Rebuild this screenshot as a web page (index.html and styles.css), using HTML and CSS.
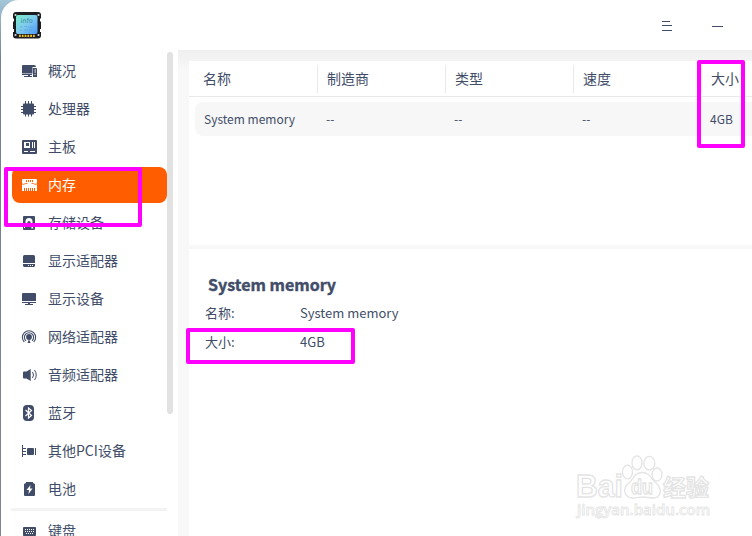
FILE: index.html
```
<!DOCTYPE html>
<html lang="zh-CN">
<head>
	<meta charset="utf-8" />
	<title>设备管理器</title>
	<link rel="stylesheet" href="styles.css">
</head>
<body>
	<div id="window">
		<div class="titlebar">
			<svg class="logo" width="30" height="28" viewBox="0 0 30 28">
				<defs>
					<linearGradient id="screen" x1="0" y1="0" x2="1" y2="1">
						<stop offset="0" stop-color="#79efc8" />
						<stop offset=".5" stop-color="#7fc9ee" />
						<stop offset="1" stop-color="#4a98fa" />
					</linearGradient>
				</defs>
				<rect x="1" y="1" width="28" height="26.500" rx="3" fill="#1c1d20" />
				<path d="M0 7.500h2v3H0zM28 7.500h2v3h-2zM0 18h2v3H0zM28 18h2v3h-2z" fill="#fff" />
				<g fill="#d5dadd"><circle cx="3.500" cy="4" r="1.100" /><circle cx="26.500" cy="4" r="1.100" /><circle cx="3.500" cy="24" r="1.100" /><circle cx="26.500" cy="24" r="1.100" /></g>
				<rect x="4" y="4" width="21.500" height="19" rx="2" fill="url(#screen)" />
				<text x="8.500" y="12" class="logo-text">info</text>
				<path d="M8 16h3M12 15.500h3M16 16h5M8 19h2M12 19h4M17 19h3" stroke="#4b9fc9" stroke-width=".8" opacity=".6" />
				<path d="M7 24.800h16.500" stroke="#f1bd16" stroke-width="2.200" stroke-dasharray="1.800 1" />
			</svg>
			<svg class="menu" width="10" height="11" viewBox="0 0 10 11"><path d="M0 .5h8M0 4.500h10M0 9.500h10" stroke="#414d68" /></svg>
			<div class="minimize"></div>
		</div>
		<div class="body">
			<ul class="sidebar">
				<li><svg viewBox="0 0 16 16"><path d="M2 2h11a2 2 0 0 1 2 2v0h-3.500v6.500H1V3a1 1 0 0 1 1-1zM1 11h10v1H9v1h2v1H3v-1h4v-1H1zM12 5h3a1 1 0 0 1 1 1v8h-4z" /><path d="M13.500 7h1.500M13.500 9h1.500M13.500 11.500h1" stroke="#fff" /></svg><span>概况</span></li>
				<li><svg viewBox="0 0 16 16"><rect x="2" y="2.500" width="11" height="11" rx="1" /><path d="M4.500 0v15.500M7.500 0v15.500M10.500 0v15.500M0 5.500h15M0 8.500h15M0 11.500h15" stroke="#414d68" fill="none" /></svg><span>处理器</span></li>
				<li><svg viewBox="0 0 16 16"><path fill-rule="evenodd" d="M2 1h13a1 1 0 0 1 1 1v12a1 1 0 0 1-1 1H2a1 1 0 0 1-1-1V2a1 1 0 0 1 1-1zM3 3v6h6V3zM11 3v6h1V3zM13 3v6h1V3zM3 12v1h4v-1zM9 12v1h5v-1z" /><path d="M5 4h3v3H5z" /></svg><span>主板</span></li>
				<li class="selected"><svg viewBox="0 0 16 16"><path d="M2 2h13a1 1 0 0 1 1 1v3.200a.8.8 0 0 0 0 1.600V14h-2v-3h-1v3h-1v-3h-1v3h-1v-3H9v3H8v-3H7v3H6v-3H5v3H4v-3H3v3H1V7.800a.8.8 0 0 0 0-1.600V3a1 1 0 0 1 1-1z" /><path d="M5 4h7.500" stroke="#ff5d00" stroke-dasharray="1 1" stroke-width="2" /><path d="M2 7.500l3-1h1.500M15 7.500l-3-1h-1.500" fill="none" stroke="#ff5d00" stroke-width=".8" /></svg><span>内存</span></li>
				<li><svg viewBox="0 0 16 16"><path fill-rule="evenodd" d="M3 1h10a1 1 0 0 1 1 1v12a1 1 0 0 1-1 1H3a1 1 0 0 1-1-1V2a1 1 0 0 1 1-1zM4.500 12V6.500a3.500 3.500 0 0 1 7 0V11l1 2.500h-2l-2-2zM3 12v1h1v-1z" /><circle cx="8" cy="7.500" r="1.600" /><path d="M8.500 9l3 3-2.500 1z" /></svg><span>存储设备</span></li>
				<li><svg viewBox="0 0 16 16"><path d="M3.500 2h9A1.500 1.500 0 0 1 14 3.500V10H2V3.500A1.500 1.500 0 0 1 3.500 2zM2 11h12v1.500a1.500 1.500 0 0 1-1.500 1.500h-9A1.500 1.500 0 0 1 2 12.500z" /><path d="M7 12.500h6" stroke="#fff" stroke-dasharray="1 1" /></svg><span>显示适配器</span></li>
				<li><svg viewBox="0 0 16 16"><path d="M2 2h12a1 1 0 0 1 1 1v7H1V3a1 1 0 0 1 1-1zM1 11h14v1H9v1h3v1H4v-1h3v-1H1z" /></svg><span>显示设备</span></li>
				<li><svg viewBox="0 0 16 16"><circle cx="8" cy="8" r="2.900" /><path d="M5 11.800a4.600 4.600 0 1 1 6 0M3.300 13a6.600 6.600 0 1 1 9.400 0" fill="none" stroke="#414d68" stroke-width="1.100" /><path d="M6.500 14L8 10l1.500 4z" /></svg><span>网络适配器</span></li>
				<li><svg viewBox="0 0 16 16"><path d="M3 4.500h2.500L9.700 2v12l-4.200-2.500H3a1 1 0 0 1-1-1v-5a1 1 0 0 1 1-1z" /><path d="M11.500 5q2 3 0 6M13.500 3q3.500 5 0 10" fill="none" stroke="#414d68" /></svg><span>音频适配器</span></li>
				<li><svg viewBox="0 0 16 16"><rect x="2" y="0" width="11" height="16" rx="4" /><path d="M4.500 5l6 5.500L7.500 13V3l3 2.500-6 5.500" fill="none" stroke="#fff" stroke-width="1.200" /></svg><span>蓝牙</span></li>
				<li><svg viewBox="0 0 16 16"><path d="M1.500 2v12M1.500 5.500H5M1.500 8.500H5M1.500 11.500H5M14.500 5v7" stroke="#414d68" /><rect x="6" y="5" width="7" height="7" rx="1" /></svg><span>其他PCI设备</span></li>
				<li><svg viewBox="0 0 16 16"><path d="M5 1h7v1l2 1v11a1 1 0 0 1-1 1H4a1 1 0 0 1-1-1V3l2-1z" /><path d="M9.500 4l-4 5H8l-.5 4 4-5.500H9z" fill="#fff" /></svg><span>电池</span></li>
				<li class="separator"></li>
				<li class="keyboard"><svg viewBox="0 0 16 16"><rect x="2" y="4" width="13" height="9" rx=".8" /><path d="M4 6.500h10M4 8.500h10M5 10.500h7" stroke="#fff" stroke-dasharray="1 1" /></svg><span>键盘</span></li>
			</ul>
			<div class="scrollbar"></div>
			<div class="content">
				<div class="table">
					<div class="row header">
						<span>名称</span><span>制造商</span><span>类型</span><span>速度</span><span>大小</span>
					</div>
					<div class="row item">
						<span>System memory</span><span>--</span><span>--</span><span>--</span><span>4GB</span>
					</div>
				</div>
				<div class="details">
					<h2>System memory</h2>
					<dl>
						<dt>名称:</dt><dd>System memory</dd>
						<dt>大小:</dt><dd>4GB</dd>
					</dl>
				</div>
			</div>
		</div>
	</div>

	<div class="mark mark-menu"></div>
	<div class="mark mark-column"></div>
	<div class="mark mark-size"></div>

	<svg class="watermark" width="140" height="70" viewBox="0 0 140 70">
		<g class="outline">
			<text x="2" y="42" class="brand" textLength="47" lengthAdjust="spacingAndGlyphs">Bai</text>
			<ellipse cx="53.500" cy="17" rx="5" ry="6.800" />
			<ellipse cx="63" cy="7.800" rx="5" ry="7" />
			<ellipse cx="75.300" cy="8.200" rx="5.500" ry="6.800" />
			<ellipse cx="83" cy="19.500" rx="5" ry="6.500" />
			<path d="M68 17.500C60 17.500 60 24 55 28C48 33 50 43 59 43C64 43 65 42 69 42C73 42 75 43 79 43C88 43 88 33 82 28C77 24 76 17.500 68 17.500Z" />
			<text x="57" y="38.500" class="du" textLength="22" lengthAdjust="spacingAndGlyphs">du</text>
			<text x="89" y="40.500" class="jingyan" textLength="46" lengthAdjust="spacingAndGlyphs">经验</text>
			<text x="3" y="60" class="address" textLength="133" lengthAdjust="spacingAndGlyphs">jingyan.baidu.com</text>
		</g>
	</svg>
</body>
</html>
```
FILE: styles.css
```
* {
	box-sizing: border-box;
}
body {
	margin: 0;
	height: 536px;
	overflow: hidden;
	background: linear-gradient(#a3c6d9, #718395 60px, #7e8492);
	color: #414d68;
	font-family: "Noto Sans CJK SC", sans-serif;
	font-size: 14px;
}
#window {
	display: flex;
	flex-direction: column;
	height: 536px;
	margin-left: 1px;
	background: #fff;
	border-radius: 18px 0 0 0;
	overflow: hidden;
}
.titlebar {
	display: flex;
	flex: none;
	align-items: center;
	height: 50px;
	padding: 2px 29px 0 11px;
}
.logo {
	margin-top: -2px;
}
.logo-text {
	font-family: "DejaVu Sans", sans-serif;
	font-size: 6.5px;
	fill: #358f9d;
}
.menu {
	margin-left: auto;
}
.minimize {
	width: 11px;
	height: 1px;
	margin-left: 40px;
	background: #414d68;
}
.body {
	display: flex;
	flex: 1;
	min-height: 0;
}
.sidebar {
	display: flex;
	flex-direction: column;
	gap: 2px;
	flex: none;
	width: 166px;
	margin: 0;
	padding: 3px 0 0 11px;
	list-style: none;
}
.sidebar li {
	display: flex;
	flex: none;
	align-items: center;
	height: 36px;
	padding-left: 9px;
	border-radius: 8px;
}
.sidebar span {
	padding-bottom: 2px;
}
.sidebar svg {
	width: 16px;
	height: 16px;
	margin-right: 11px;
	fill: #414d68;
	overflow: visible;
}
.sidebar .selected {
	background: #ff5d00;
	color: #fff;
}
.sidebar .selected svg {
	fill: #fff;
}
.sidebar .separator {
	height: 3px;
	margin: -1px 0 0 -1px;
	border-radius: 0;
	background: #f3f3f3;
}
.scrollbar {
	flex: none;
	width: 6px;
	height: 362px;
	margin: 2px 5px 0 0;
	border-radius: 3px;
	background: #e2e2e2;
}
.content {
	display: flex;
	flex-direction: column;
	flex: 1;
	gap: 4px;
	min-width: 0;
	padding: 11px 0 0 11px;
	background: linear-gradient(#efefef, #f8f8f8 20px);
}
.table {
	height: 184px;
	background: #fff;
	overflow: hidden;
}
.row {
	display: grid;
	grid-template-columns: 128px 128px 128px 128px 1fr;
	align-items: center;
	white-space: nowrap;
}
.header {
	height: 36px;
	border-bottom: 1px solid #e9e9e9;
}
.header span {
	height: 28px;
	padding-left: 9px;
	border-right: 1px solid #e9e9e9;
	line-height: 27px;
}
.header span:first-child {
	padding-left: 14px;
}
.row.header {
	grid-template-columns: 129px 128px 128px 128px 1fr;
}
.header span:last-child {
	border: 0;
}
.item {
	height: 34px;
	margin: 5px 0 0 6px;
	padding: 0 0 2px 3px;
	border-radius: 8px 0 0 8px;
	background: #f7f7f7;
	font-size: 12px;
}
.item span:first-child {
	padding-left: 6px;
}
.details {
	flex: 1;
	padding: 23px 16px;
	background: #fff;
}
.details h2 {
	margin: 0 0 2px 3px;
	font-size: 16px;
	line-height: 24px;
	font-weight: bold;
	-webkit-text-stroke: .4px #414d68;
}
.details dl {
	display: grid;
	grid-template-columns: 95px 1fr;
	margin: 0;
	font-size: 13px;
	line-height: 29px;
}
.details dd {
	margin: 0;
}
.mark {
	position: absolute;
	border: 4px solid #f0f;
	border-radius: 2px;
}
.mark-menu {
	left: 4px;
	top: 167px;
	width: 138px;
	height: 60px;
}
.mark-column {
	left: 697px;
	top: 60px;
	width: 48px;
	height: 88px;
}
.mark-size {
	left: 186px;
	top: 328px;
	width: 169px;
	height: 36px;
}
.watermark {
	position: absolute;
	left: 574px;
	top: 455px;
	overflow: visible;
}
.outline {
	fill: #fff;
	stroke: #e4e4e4;
	stroke-width: 1.3px;
	font-family: "Liberation Sans", sans-serif;
	font-weight: bold;
}
.brand {
	font-size: 31px;
}
.du {
	font-size: 20px;
}
.jingyan {
	font-family: "Noto Sans CJK SC", sans-serif;
	font-size: 23px;
}
.address {
	font-family: "Open Sans", sans-serif;
	font-size: 15px;
	font-weight: 600;
	stroke-width: .8px;
}
```
